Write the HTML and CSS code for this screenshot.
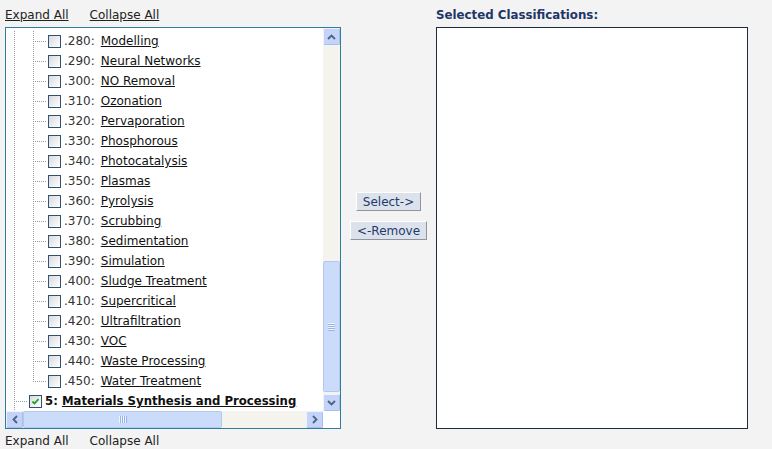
FILE: index.html
```html
<!DOCTYPE html>
<html lang="en">
<head>
  <meta charset="UTF-8">
  <title>Classifications</title>
  <link rel="stylesheet" href="styles.css">
</head>
<body>
  <div class="page">
    <div class="tree-col">
      <div class="links">
        <a href="#">Expand All</a>
        <a href="#">Collapse All</a>
      </div>

      <div class="tree-box">
        <div class="tree">
          <div class="row"><span class="guide"></span><span class="tee"></span><span class="cb"></span><span class="code">.280:</span> <a href="#">Modelling</a></div>
          <div class="row"><span class="guide"></span><span class="tee"></span><span class="cb"></span><span class="code">.290:</span> <a href="#">Neural Networks</a></div>
          <div class="row"><span class="guide"></span><span class="tee"></span><span class="cb"></span><span class="code">.300:</span> <a href="#">NO Removal</a></div>
          <div class="row"><span class="guide"></span><span class="tee"></span><span class="cb"></span><span class="code">.310:</span> <a href="#">Ozonation</a></div>
          <div class="row"><span class="guide"></span><span class="tee"></span><span class="cb"></span><span class="code">.320:</span> <a href="#">Pervaporation</a></div>
          <div class="row"><span class="guide"></span><span class="tee"></span><span class="cb"></span><span class="code">.330:</span> <a href="#">Phosphorous</a></div>
          <div class="row"><span class="guide"></span><span class="tee"></span><span class="cb"></span><span class="code">.340:</span> <a href="#">Photocatalysis</a></div>
          <div class="row"><span class="guide"></span><span class="tee"></span><span class="cb"></span><span class="code">.350:</span> <a href="#">Plasmas</a></div>
          <div class="row"><span class="guide"></span><span class="tee"></span><span class="cb"></span><span class="code">.360:</span> <a href="#">Pyrolysis</a></div>
          <div class="row"><span class="guide"></span><span class="tee"></span><span class="cb"></span><span class="code">.370:</span> <a href="#">Scrubbing</a></div>
          <div class="row"><span class="guide"></span><span class="tee"></span><span class="cb"></span><span class="code">.380:</span> <a href="#">Sedimentation</a></div>
          <div class="row"><span class="guide"></span><span class="tee"></span><span class="cb"></span><span class="code">.390:</span> <a href="#">Simulation</a></div>
          <div class="row"><span class="guide"></span><span class="tee"></span><span class="cb"></span><span class="code">.400:</span> <a href="#">Sludge Treatment</a></div>
          <div class="row"><span class="guide"></span><span class="tee"></span><span class="cb"></span><span class="code">.410:</span> <a href="#">Supercritical</a></div>
          <div class="row"><span class="guide"></span><span class="tee"></span><span class="cb"></span><span class="code">.420:</span> <a href="#">Ultrafiltration</a></div>
          <div class="row"><span class="guide"></span><span class="tee"></span><span class="cb"></span><span class="code">.430:</span> <a href="#">VOC</a></div>
          <div class="row"><span class="guide"></span><span class="tee"></span><span class="cb"></span><span class="code">.440:</span> <a href="#">Waste Processing</a></div>
          <div class="row"><span class="guide"></span><span class="elbow"></span><span class="cb"></span><span class="code">.450:</span> <a href="#">Water Treatment</a></div>
          <div class="row root"><span class="tee"></span><span class="cb checked"><svg viewBox="0 0 11 11" width="11" height="11"><path d="M2.5 5.5 L4.5 7.5 L8.5 3.2" fill="none" stroke="#21a121" stroke-width="1.8"/></svg></span><span class="code">5:</span>&nbsp;<a href="#">Materials Synthesis and Processing</a></div>
        </div>

        <div class="vscroll">
          <div class="sb-btn"><svg viewBox="0 0 9 6" width="9" height="6"><path d="M1 5 L4.5 1.5 L8 5" fill="none" stroke="#4d6185" stroke-width="1.8"/></svg></div>
          <div class="vtrack"><div class="vthumb"><span class="grip"></span></div></div>
          <div class="sb-btn"><svg viewBox="0 0 9 6" width="9" height="6"><path d="M1 1 L4.5 4.5 L8 1" fill="none" stroke="#4d6185" stroke-width="1.8"/></svg></div>
        </div>

        <div class="hscroll">
          <div class="sb-btn"><svg viewBox="0 0 6 9" width="6" height="9"><path d="M5 1 L1.5 4.5 L5 8" fill="none" stroke="#4d6185" stroke-width="1.8"/></svg></div>
          <div class="htrack"><div class="hthumb"><span class="grip"></span></div></div>
          <div class="sb-btn"><svg viewBox="0 0 6 9" width="6" height="9"><path d="M1 1 L4.5 4.5 L1 8" fill="none" stroke="#4d6185" stroke-width="1.8"/></svg></div>
        </div>

        <div class="corner"></div>
      </div>

      <div class="links bottom">
        <a href="#">Expand All</a>
        <a href="#">Collapse All</a>
      </div>
    </div>

    <div class="action-col">
      <button class="btn">Select-&gt;</button>
      <button class="btn">&lt;-Remove</button>
    </div>

    <div class="sel-col">
      <h3 class="sel-title">Selected Classifications:</h3>
      <div class="sel-box"></div>
    </div>
  </div>
</body>
</html>
```

FILE: styles.css
```css
* {
  box-sizing: border-box;
}

body {
  margin: 0;
  background-color: #f3f3f3;
  font-family: "DejaVu Sans", Verdana, sans-serif;
  font-size: 12px;
  color: #222;
}

.page {
  display: flex;
  padding-left: 5px;
  height: 449px;
}

/* colonne de gauche : liens + arbre */
.tree-col {
  width: 336px;
  flex: none;
}

.links {
  display: flex;
  gap: 21px;
  height: 27px;
  padding-top: 7px;
  line-height: 16px;
}

.links a {
  color: #222;
  text-decoration: underline;
}

.links.bottom {
  height: auto;
  padding-top: 4px;
}

.links.bottom a {
  text-decoration: none;
}

.tree-box {
  width: 336px;
  height: 402px;
  border: 1px solid #2f7d9b;
  background-color: #fff;
  display: grid;
  grid-template-columns: 317px 17px;
  grid-template-rows: 383px 17px;
}

.tree {
  overflow: hidden;
  padding-top: 3px;
}

.row {
  display: flex;
  align-items: center;
  height: 20px;
  padding-left: 8px;
  white-space: nowrap;
}

.row a {
  color: #111;
  text-decoration: underline;
}

.code {
  color: #333;
  margin-right: 6px;
}

.root {
  font-weight: bold;
  font-size: 11.7px;
}

.root .code {
  color: #111;
  margin-right: 0;
}

/* lignes pointillées de l'arbre */
.guide,
.tee,
.elbow {
  flex: none;
  align-self: stretch;
  background-repeat: no-repeat;
}

.guide {
  width: 19px;
  background-image: repeating-linear-gradient(to bottom, #9a9a9a 0 1px, transparent 1px 2px);
  background-size: 1px 100%;
}

.tee {
  width: 15px;
  background-image:
    repeating-linear-gradient(to bottom, #9a9a9a 0 1px, transparent 1px 2px),
    repeating-linear-gradient(to right, #9a9a9a 0 1px, transparent 1px 2px);
  background-size: 1px 100%, 13px 1px;
  background-position: 0 0, 0 10px;
}

.elbow {
  width: 15px;
  background-image:
    repeating-linear-gradient(to bottom, #9a9a9a 0 1px, transparent 1px 2px),
    repeating-linear-gradient(to right, #9a9a9a 0 1px, transparent 1px 2px);
  background-size: 1px 11px, 13px 1px;
  background-position: 0 0, 0 10px;
}

.cb {
  flex: none;
  width: 13px;
  height: 13px;
  margin-right: 3px;
  border: 1px solid #34506f;
  background: linear-gradient(135deg, #d6d9df 0%, #f4f5f7 70%, #fff 100%);
  display: flex;
  align-items: center;
  justify-content: center;
}

/* barres de défilement style XP */
.vscroll {
  display: flex;
  flex-direction: column;
  background-color: #f4f3ee;
}

.hscroll {
  display: flex;
  background-color: #f4f3ee;
}

.sb-btn {
  flex: none;
  width: 17px;
  height: 17px;
  background-color: #c3d4f8;
  border: 1px solid #eef3fd;
  border-right-color: #a9bfea;
  border-bottom-color: #a9bfea;
  border-radius: 2px;
  display: flex;
  align-items: center;
  justify-content: center;
}

.vtrack {
  flex: 1;
  padding-top: 216px;
}

.vthumb {
  height: 131px;
  background-color: #cbdcfa;
  border: 1px solid #b3c8f0;
  border-radius: 2px;
  display: flex;
  align-items: center;
  justify-content: center;
}

.htrack {
  flex: 1;
}

.hthumb {
  width: 199px;
  height: 17px;
  background-color: #cbdcfa;
  border: 1px solid #b3c8f0;
  border-radius: 2px;
  display: flex;
  align-items: center;
  justify-content: center;
}

.vthumb .grip {
  width: 7px;
  height: 8px;
  background: repeating-linear-gradient(to bottom, #eef4fe 0 1px, #98b4e8 1px 2px);
}

.hthumb .grip {
  width: 8px;
  height: 7px;
  background: repeating-linear-gradient(to right, #eef4fe 0 1px, #98b4e8 1px 2px);
}

.corner {
  background-color: #fff;
}

/* colonne du milieu : boutons */
.action-col {
  width: 95px;
  flex: none;
  display: flex;
  flex-direction: column;
  align-items: center;
  padding-top: 192px;
  gap: 10px;
}

.btn {
  font-family: "DejaVu Sans", Verdana, sans-serif;
  font-size: 12px;
  line-height: 14px;
  color: #1f3a6d;
  background-color: #dce2eb;
  border: 1px solid;
  border-color: #fff #8e959f #8e959f #fff;
  padding: 2px 6px 1px;
  cursor: pointer;
}

/* colonne de droite */
.sel-col {
  flex: none;
}

.sel-title {
  margin: 0;
  height: 27px;
  padding-top: 7px;
  line-height: 16px;
  font-size: 11.8px;
  font-weight: bold;
  color: #1e3668;
}

.sel-box {
  width: 312px;
  height: 402px;
  border: 1px solid #1d2b3a;
  background-color: #fff;
}
```
